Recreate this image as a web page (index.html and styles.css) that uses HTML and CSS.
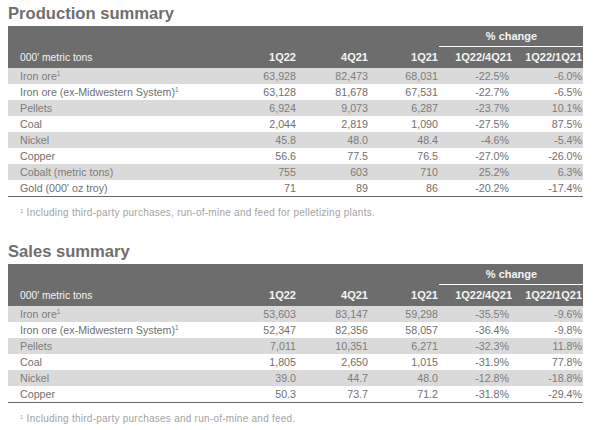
FILE: index.html
```html
<!DOCTYPE html>
<html>
<head>
<meta charset="utf-8">
<link rel="stylesheet" href="styles.css">
</head>
<body>
<div class="page">
  <section class="block">
    <h2 class="title">Production summary</h2>
    <table class="data">
      <colgroup>
        <col class="c-label"><col class="c-a"><col class="c-b"><col class="c-c"><col class="c-d"><col class="c-e">
      </colgroup>
      <thead>
        <tr class="h1"><th></th><th></th><th></th><th></th><th colspan="2" class="pc">% change</th></tr>
        <tr class="h2"><th class="lab">000' metric tons</th><th>1Q22</th><th>4Q21</th><th>1Q21</th><th class="d">1Q22/4Q21</th><th>1Q22/1Q21</th></tr>
      </thead>
      <tbody>
        <tr class="g"><td class="lab">Iron ore<sup>1</sup></td><td>63,928</td><td>82,473</td><td>68,031</td><td class="d">-22.5%</td><td>-6.0%</td></tr>
        <tr><td class="lab">Iron ore (ex-Midwestern System)<sup>1</sup></td><td>63,128</td><td>81,678</td><td>67,531</td><td class="d">-22.7%</td><td>-6.5%</td></tr>
        <tr class="g"><td class="lab">Pellets</td><td>6,924</td><td>9,073</td><td>6,287</td><td class="d">-23.7%</td><td>10.1%</td></tr>
        <tr><td class="lab">Coal</td><td>2,044</td><td>2,819</td><td>1,090</td><td class="d">-27.5%</td><td>87.5%</td></tr>
        <tr class="g"><td class="lab">Nickel</td><td>45.8</td><td>48.0</td><td>48.4</td><td class="d">-4.6%</td><td>-5.4%</td></tr>
        <tr><td class="lab">Copper</td><td>56.6</td><td>77.5</td><td>76.5</td><td class="d">-27.0%</td><td>-26.0%</td></tr>
        <tr class="g"><td class="lab">Cobalt (metric tons)</td><td>755</td><td>603</td><td>710</td><td class="d">25.2%</td><td>6.3%</td></tr>
        <tr class="last"><td class="lab">Gold (000' oz troy)</td><td>71</td><td>89</td><td>86</td><td class="d">-20.2%</td><td>-17.4%</td></tr>
      </tbody>
    </table>
    <p class="note"><sup>1</sup> Including third-party purchases, run-of-mine and feed for pelletizing plants.</p>
  </section>

  <section class="block">
    <h2 class="title">Sales summary</h2>
    <table class="data">
      <colgroup>
        <col class="c-label"><col class="c-a"><col class="c-b"><col class="c-c"><col class="c-d"><col class="c-e">
      </colgroup>
      <thead>
        <tr class="h1"><th></th><th></th><th></th><th></th><th colspan="2" class="pc">% change</th></tr>
        <tr class="h2"><th class="lab">000' metric tons</th><th>1Q22</th><th>4Q21</th><th>1Q21</th><th class="d">1Q22/4Q21</th><th>1Q22/1Q21</th></tr>
      </thead>
      <tbody>
        <tr class="g"><td class="lab">Iron ore<sup>1</sup></td><td>53,603</td><td>83,147</td><td>59,298</td><td class="d">-35.5%</td><td>-9.6%</td></tr>
        <tr><td class="lab">Iron ore (ex-Midwestern System)<sup>1</sup></td><td>52,347</td><td>82,356</td><td>58,057</td><td class="d">-36.4%</td><td>-9.8%</td></tr>
        <tr class="g"><td class="lab">Pellets</td><td>7,011</td><td>10,351</td><td>6,271</td><td class="d">-32.3%</td><td>11.8%</td></tr>
        <tr><td class="lab">Coal</td><td>1,805</td><td>2,650</td><td>1,015</td><td class="d">-31.9%</td><td>77.8%</td></tr>
        <tr class="g"><td class="lab">Nickel</td><td>39.0</td><td>44.7</td><td>48.0</td><td class="d">-12.8%</td><td>-18.8%</td></tr>
        <tr class="last"><td class="lab">Copper</td><td>50.3</td><td>73.7</td><td>71.2</td><td class="d">-31.8%</td><td>-29.4%</td></tr>
      </tbody>
    </table>
    <p class="note"><sup>1</sup> Including third-party purchases and run-of-mine and feed.</p>
  </section>
</div>
</body>
</html>
```

FILE: styles.css
```css
html, body {
  margin: 0;
  padding: 0;
  background: #ffffff;
}

body {
  font-family: "Liberation Sans", Arial, sans-serif;
  color: #6e6e6e;
}

.page {
  padding: 0 18px 0 8px;
}

.title {
  margin: 0;
  padding-top: 3.5px;
  height: 22.5px;
  font-size: 16.6px;
  line-height: 20px;
  font-weight: bold;
  color: #6f6f6f;
}

.data {
  width: 575px;
  table-layout: fixed;
  border-collapse: separate;
  border-spacing: 0;
  border-bottom: 1px solid #6a6a6a;
}

.c-label { width: 218px; }
.c-a { width: 71px; }
.c-b { width: 72px; }
.c-c { width: 70px; }
.c-d { width: 74px; }
.c-e { width: 70px; }

.data th {
  background: #6d6d6d;
  color: #f4f4f4;
  font-size: 11px;
  font-weight: bold;
  text-align: right;
  padding: 0 1px 0 0;
  white-space: nowrap;
}

.data .h1 th {
  height: 21px;
  line-height: 20px;
}

.data .h1 th.pc {
  text-align: center;
  height: 20px;
  border-bottom: 1px solid #ffffff;
  padding: 0 0 0 1px;
}

.data .h2 th {
  height: 21px;
  line-height: 21px;
}

.data th.lab {
  text-align: left;
  font-weight: normal;
  font-size: 10.3px;
  padding-left: 12px;
}

.data td {
  height: 16px;
  line-height: 16px;
  font-size: 10.7px;
  text-align: right;
  padding: 0 1px 0 0;
  white-space: nowrap;
  color: #707070;
}

.data td.d {
  padding-right: 4px;
}

.data td.lab {
  text-align: left;
  padding-left: 12px;
}

.data tr.g td {
  background: #dadada;
  color: #7c7c7c;
}

.data sup {
  font-size: 6.5px;
  line-height: 0;
  vertical-align: 4px;
}

.note {
  margin: 8.5px 0 18.5px 12px;
  font-size: 10px;
  line-height: 14px;
  letter-spacing: 0.25px;
  color: #a3a3a3;
}

.note sup {
  font-size: 6px;
  line-height: 0;
  vertical-align: 3px;
}
```
